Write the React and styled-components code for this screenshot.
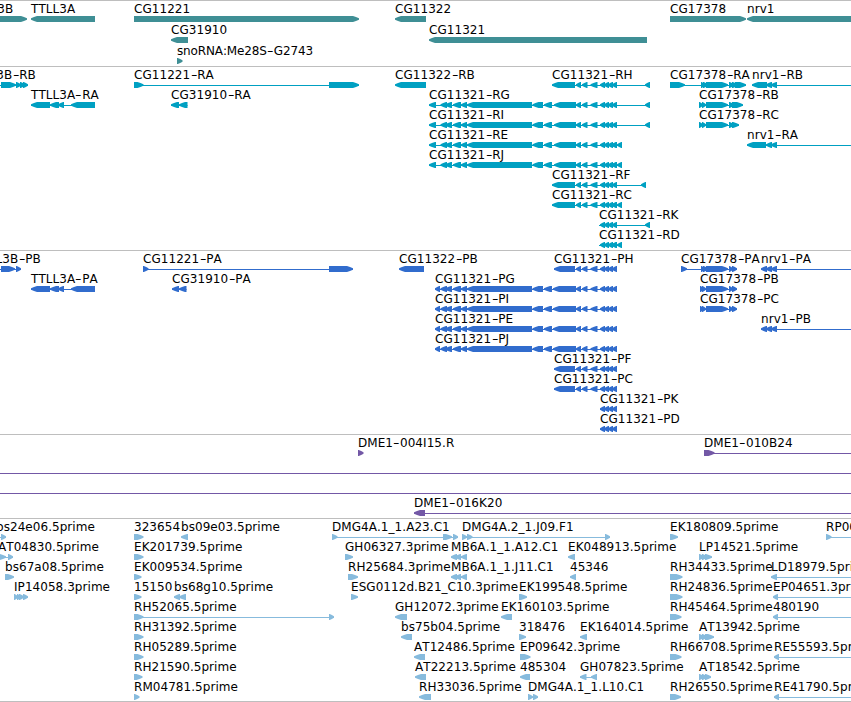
import React from "react";
import styled, { createGlobalStyle } from 'styled-components';

const VIEW_WIDTH = 851;
const GLYPH_HEIGHT = 6;

const GlobalStyle = createGlobalStyle`
	body {
		margin: 0;
		background: #fff;
		overflow: hidden;
	}
`;

const Browser = styled.div`
	width: ${VIEW_WIDTH}px;
	overflow: hidden;
	border-bottom: 1px solid #bebebe;
	font-family: "DejaVu Sans", sans-serif;
	font-size: 12px;
	font-kerning: none;
	color: #000;
`;

// One track, a stack of lanes
const TrackBox = styled.section`
	display: flex;
	flex-direction: column;
	border-top: 1px solid #bebebe;
	padding: 2px 0 ${props => props.$gap}px;
	color: ${props => props.$color};
`;

const LaneBox = styled.div`
	display: flex;
	flex-direction: column;
	height: ${props => props.$pitch}px;
`;

// All labels share one cell, the margin places them along the sequence
const Labels = styled.div`
	display: grid;
	height: 13px;
	color: #000;
`;

const Label = styled.span`
	grid-area: 1 / 1;
	justify-self: start;
	line-height: 13px;
	white-space: pre;
	letter-spacing: ${props => props.$tight ? -0.13 : 0.05}px;
`;

// Wide hyphen between the gene name and the isoform
const Dash = styled.span`
	display: inline-block;
	width: 4.4px;
	margin: 0 1.3px;
	transform: scaleX(1.5);
`;

const Glyphs = styled.svg`
	display: block;
	width: ${VIEW_WIDTH}px;
	height: ${GLYPH_HEIGHT}px;
	overflow: hidden;
	fill: currentColor;
`;

// Feature: label, start, strand, exons, end of line
const f = (label, start, strand, blocks, lineEnd) => ({ label, start, strand, blocks, lineEnd });

// Exon groups shared by the CG11321 isoforms
const tail = [[576, 581], [582, 587.5], [590.5, 597.5]];
const cluster = [[600, 605], [604, 609], [608, 613], [612, 617]];
const lastPair = [[611.5, 617], [617, 622]];
const longStart = [[429, 436], [440.5, 447], [445, 452], [453, 461], [461, 467]];
const middle = [[467, 532], [532.5, 543], [544, 552]];
const protStart = [[435, 440], [440.5, 447], [445, 452], [453, 461], [461, 467]];
const rg = [...longStart, ...middle, [554, 576], ...tail, ...cluster, [645, 650]];
const re = [...longStart, ...middle, [554, 576], ...tail, ...cluster, ...lastPair];
const pg = [...protStart, ...middle, [553, 576], ...tail, ...cluster];
const ph = [[554, 575], ...tail, ...cluster];
const nrvEnd = [[766, 772], [771, 777]];

const tracks = [
	{
		name: 'genes', color: '#3f8f95', pitch: 21, gap: 0,
		lanes: [
			[
				f('TTLL3B', -31, 1, [[-31, 27]]),
				f('TTLL3A', 31, -1, [[31, 95]]),
				f('CG11221', 134, 1, [[134, 359]]),
				f('CG11322', 395, -1, [[395, 426]]),
				f('CG17378', 670, 1, [[670, 746]]),
				f('nrv1', 747, -1, [[747, 900]]),
			],
			[f('CG31910', 171, -1, [[171, 188]]), f('CG11321', 429, -1, [[429, 647]])],
			[f('snoRNA:Me28S-G2743', 177, 1, [[177, 182.5]])],
		],
	},
	{
		name: 'transcripts', color: '#00a0c2', pitch: 20, gap: 1,
		lanes: [
			[
				f('TTLL3B-RB', -32, 1, [[-32, -10], [1, 16], [16, 21], [20, 25], [23, 28]]),
				f('CG11221-RA', 134, 1, [[134, 143.5], [329, 359]]),
				f('CG11322-RB', 395, -1, [[395, 426]]),
				f('CG11321-RH', 552, -1, [[552, 575], ...tail, ...cluster, [645, 650]]),
				f('CG17378-RA', 670, 1, [[670, 685], [701, 705], [703, 708], [706, 728], [729, 734], [732, 738], [735, 746]]),
				f('nrv1-RB', 752, -1, [[752, 767], ...nrvEnd], 900),
			],
			[
				f('TTLL3A-RA', 31, -1, [[31, 50], [50, 59], [58, 64], [71, 95]]),
				f('CG31910-RA', 171, -1, [[171, 179], [179, 187.5]]),
				f('CG11321-RG', 429, -1, rg),
				f('CG17378-RB', 699, 1, [[699, 703], [702, 706], [706, 728], [729, 734], [732, 743]]),
			],
			[
				f('CG11321-RI', 429, -1, rg),
				f('CG17378-RC', 699, 1, [[699, 703], [702, 706], [706, 728], [729, 734], [732, 739]]),
			],
			[f('CG11321-RE', 429, -1, re), f('nrv1-RA', 747, -1, [[747, 766], ...nrvEnd], 900)],
			[f('CG11321-RJ', 429, -1, re)],
			[f('CG11321-RF', 552, -1, [[552, 575], ...tail, ...cluster, [641, 646]])],
			[f('CG11321-RC', 552, -1, [[552, 575], ...tail, ...cluster, ...lastPair])],
			[f('CG11321-RK', 599, -1, [...cluster, [645, 650]])],
			[f('CG11321-RD', 599, -1, [...cluster, ...lastPair])],
		],
	},
	{
		name: 'proteins', color: '#316ccd', pitch: 20, gap: 1,
		lanes: [
			[
				f('TTLL3B-PB', -26, 1, [[-26, -10], [1, 15], [16, 21]]),
				f('CG11221-PA', 143, 1, [[143, 148.5], [329, 353]]),
				f('CG11322-PB', 399, -1, [[399, 424]]),
				f('CG11321-PH', 554, -1, ph),
				f('CG17378-PA', 681, 1, [[681, 687], [701, 705], [703, 708], [706, 728], [729, 733], [732, 737]]),
				f('nrv1-PA', 761, -1, [[761, 767], ...nrvEnd], 900),
			],
			[
				f('TTLL3A-PA', 31, -1, [[31, 50], [50, 59], [58, 64], [71, 95]]),
				f('CG31910-PA', 172, -1, [[172, 179], [179, 186.5]]),
				f('CG11321-PG', 435, -1, pg),
				f('CG17378-PB', 700, 1, [[700, 704], [702, 706], [706, 728], [729, 733], [732, 737]]),
			],
			[
				f('CG11321-PI', 435, -1, pg),
				f('CG17378-PC', 700, 1, [[700, 704], [702, 706], [706, 728], [729, 733], [732, 737]]),
			],
			[f('CG11321-PE', 435, -1, pg), f('nrv1-PB', 761, -1, [[761, 767], ...nrvEnd], 900)],
			[f('CG11321-PJ', 435, -1, pg)],
			[f('CG11321-PF', 554, -1, ph)],
			[f('CG11321-PC', 554, -1, ph)],
			[f('CG11321-PK', 600, -1, cluster)],
			[f('CG11321-PD', 600, -1, cluster)],
		],
	},
	{
		name: 'bacs', color: '#7358a6', pitch: 20, gap: 1,
		lanes: [
			[f('DME1-004I15.R', 358, 1, [[358, 363.5]]), f('DME1-010B24', 704, 1, [[704, 714.5]], 900)],
			[f('', -40, 1, [], 900)],
			[f('', -40, 1, [], 900)],
			[f('DME1-016K20', 414, -1, [[414, 425]], 900)],
		],
	},
	{
		name: 'ests', color: '#87bbdd', pitch: 20, gap: 0,
		lanes: [
			[
				f('bs24e06.5prime', -4, 1, [[-20, -8], [1, 6]]),
				f('323654', 134, 1, [[134, 143.5]]),
				f('bs09e03.5prime', 181, -1, [[181, 188]]),
				f('DMG4A.1_1.A23.C1', 332, 1, [[332, 337.5], [443, 452], [453, 458]]),
				f('DMG4A.2_1.J09.F1', 462, 1, [[462, 467], [467, 472.5], [605, 610]]),
				f('EK180809.5prime', 670, 1, [[670, 678]]),
				f('RP00621.5prime', 826, 1, [[826, 831.5]], 900),
			],
			[
				f('AT04830.5prime', -2, 1, [[-2, 6], [8, 13]]),
				f('EK201739.5prime', 134, 1, [[134, 143.5]]),
				f('GH06327.3prime', 345, 1, [[345, 353]]),
				f('MB6A.1_1.A12.C1', 451, -1, [[451, 457], [455, 461], [461, 467]]),
				f('EK048913.5prime', 568, -1, [[568, 575]]),
				f('LP14521.5prime', 699, 1, [[699, 704], [702, 707], [705, 712]]),
			],
			[
				f('bs67a08.5prime', 5, 1, [[5, 14]]),
				f('EK009534.5prime', 134, 1, [[134, 141.5]]),
				f('RH25684.3prime', 348, 1, [[348, 358]]),
				f('MB6A.1_1.J11.C1', 451, -1, [[451, 457], [455, 461], [461, 467]]),
				f('45346', 570, -1, [[570, 576]]),
				f('RH34433.5prime', 670, 1, [[670, 682.5]]),
				f('LD18979.5prime', 771, -1, [[771, 777]], 900),
			],
			[
				f('IP14058.3prime', 14, 1, [[14, 18], [17, 21], [19, 24], [23, 28]]),
				f('15150', 134, 1, [[134, 141.5]]),
				f('bs68g10.5prime', 174, -1, [[174, 180], [179, 186]]),
				f('ESG0112d.B21_C10.3prime', 351, 1, [[351, 358]]),
				f('EK199548.5prime', 519, 1, [[519, 527]]),
				f('RH24836.5prime', 670, 1, [[670, 682.5]]),
				f('EP04651.3prime', 773, -1, [[773, 778]], 900),
			],
			[
				f('RH52065.5prime', 134, 1, [[134, 143.5], [329, 334]]),
				f('GH12072.3prime', 395, -1, [[395, 407]]),
				f('EK160103.5prime', 501, -1, [[501, 512]]),
				f('RH45464.5prime', 670, 1, [[670, 681.5]]),
				f('480190', 773, -1, [[773, 778]], 900),
			],
			[
				f('RH31392.5prime', 134, 1, [[134, 143.5]]),
				f('bs75b04.5prime', 401, -1, [[401, 412]]),
				f('318476', 519, 1, [[519, 526]]),
				f('EK164014.5prime', 580, -1, [[580, 587]]),
				f('AT13942.5prime', 699, 1, [[699, 704], [702, 707], [705, 714]]),
			],
			[
				f('RH05289.5prime', 134, 1, [[134, 143.5]]),
				f('AT12486.5prime', 414, -1, [[414, 425]]),
				f('EP09642.3prime', 520, 1, [[520, 530.5]]),
				f('RH66708.5prime', 670, 1, [[670, 681.5]]),
				f('RE55593.5prime', 774, -1, [[774, 779]], 900),
			],
			[
				f('RH21590.5prime', 134, 1, [[134, 142.5]]),
				f('AT22213.5prime', 415, -1, [[415, 426]]),
				f('485304', 520, -1, [[520, 530]]),
				f('GH07823.5prime', 580, -1, [[580, 586.5], [591, 597]]),
				f('AT18542.5prime', 699, 1, [[699, 704], [702, 707], [705, 711]]),
			],
			[
				f('RM04781.5prime', 134, 1, [[134, 139.5]]),
				f('RH33036.5prime', 419, -1, [[419, 431]]),
				f('DMG4A.1_1.L10.C1', 528, 1, [[528, 533], [533, 538]]),
				f('RH26550.5prime', 670, 1, [[670, 681]]),
				f('RE41790.5prime', 774, -1, [[774, 779]], 900),
			],
		],
	},
];

// Block with a pointed end on the side of its strand
const blockPoints = (from, to, strand) => {
	const head = Math.min(6, (to - from) * 0.85);
	const tip = strand > 0 ? to : from;
	const back = strand > 0 ? from : to;
	const neck = tip - strand * head;
	const mid = tip - strand * head * 0.5;
	return `${back},0 ${neck},0 ${mid},1 ${tip},2.3 ${tip},3.7 ${mid},5 ${neck},6 ${back},6`;
};

const Feature = ({ start, strand, blocks, lineEnd }) => {
	const end = lineEnd || blocks[blocks.length - 1][1];
	const hasLine = lineEnd || blocks.length > 1;
	return (
		<g>
			{hasLine && <rect x={start} y="3" width={end - start} height="1" />}
			{blocks.map(([from, to], i) => (
				<polygon key={i} points={blockPoints(from, to, strand)} />
			))}
		</g>
	);
};

const Lane = ({ features, pitch }) => (
	<LaneBox $pitch={pitch}>
		<Labels>
			{features.map(({ label, start }) => {
				const [name, suffix] = label.split('-');
				return (
					<Label key={label} $tight={label.startsWith('snoRNA')} style={{ marginLeft: start }}>
						{name}{suffix && <><Dash>-</Dash>{suffix}</>}
					</Label>
				);
			})}
		</Labels>
		<Glyphs>
			{features.map((item, i) => <Feature key={i} {...item} />)}
		</Glyphs>
	</LaneBox>
);

const App = () => (
	<>
		<GlobalStyle />
		<Browser>
			{tracks.map(track => (
				<TrackBox key={track.name} $color={track.color} $gap={track.gap}>
					{track.lanes.map((lane, i) => (
						<Lane key={i} features={lane} pitch={track.pitch} />
					))}
				</TrackBox>
			))}
		</Browser>
	</>
);

export default App;
